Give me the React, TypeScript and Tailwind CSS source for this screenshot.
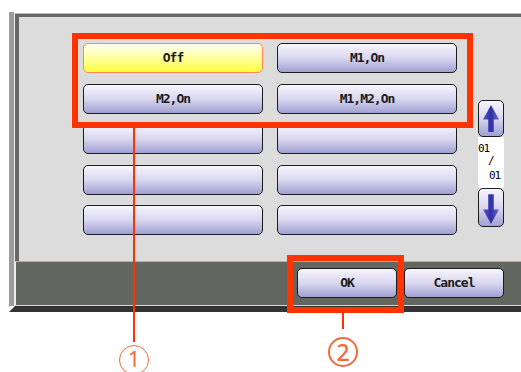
import React from 'react';

type KeyProps = { label?: string; active?: boolean; className?: string };

// Lavender soft key, yellow when it is the selected setting
function Key({ label = '', active = false, className = '' }: KeyProps) {
  const skin = active
    ? 'bg-linear-to-b from-[#fffff4] via-[#ffff9a] to-[#ffff2a] border-[#ff8a55]'
    : 'bg-linear-to-b from-[#f7f5fd] via-[#d9d7ef] to-[#a0a0d2] border-[#1c1c1c]';
  return (
    <div
      className={`h-[30px] rounded-[5px] border-[1.5px] flex items-center justify-center text-[13px] font-bold tracking-[-1px] text-[#1a1a1a] ${skin} ${className}`}
    >
      {label}
    </div>
  );
}

function ArrowKey({ dir, className = '' }: { dir: 'up' | 'down'; className?: string }) {
  const path =
    dir === 'up'
      ? 'M12 4 L20 18 L14.8 18 L14.8 30 L9.2 30 L9.2 18 L4 18 Z'
      : 'M9.2 5 L14.8 5 L14.8 20 L20 20 L12 34 L4 20 L9.2 20 Z';
  return (
    <div
      className={`w-[26px] rounded-[5px] border-[1.5px] border-[#1c1c1c] bg-linear-to-b from-[#f7f5fd] via-[#d9d7ef] to-[#a0a0d2] flex justify-center ${className}`}
    >
      <svg width="24" height="100%" viewBox={dir === 'up' ? '0 0 24 34' : '0 0 24 36'} preserveAspectRatio="none">
        <defs>
          <linearGradient id={`ag-${dir}`} x1="0" y1="0" x2="1" y2="0">
            <stop offset="0" stopColor="#5656c4" />
            <stop offset="0.5" stopColor="#3030a6" />
            <stop offset="1" stopColor="#6a6ad0" />
          </linearGradient>
        </defs>
        <path d={path} fill={`url(#ag-${dir})`} />
      </svg>
    </div>
  );
}

export default function App() {
  const rows: [string, string][] = [
    ['Off', 'M1,On'],
    ['M2,On', 'M1,M2,On'],
    ['', ''],
    ['', ''],
    ['', ''],
  ];
  const rowGap = ['', 'mt-[11px]', 'mt-[10px]', 'mt-[11px]', 'mt-[10px]'];

  return (
    <div className="relative w-[521px] h-[372px] bg-white overflow-hidden font-['DejaVu_Sans_Mono','Liberation_Mono',monospace]">
      <div className="pt-[12px] pl-[9px]">
        <div className="flex">
          {/* left outer bar */}
          <div className="w-[5px] bg-[#9c9c9c]" />
          <div className="w-[1px] bg-[#ececec] mt-[1px]" />

          <div className="flex-1 flex flex-col pt-[1px]">
            <div className="h-[1px] bg-[#b9b9b9]" />
            <div className="h-[3px] bg-[#676767]" />

            {/* panel */}
            <div className="flex h-[244px]">
              <div className="w-[4px] bg-[#676767]" />
              <div className="flex-1 bg-[#dcdcdc] flex pl-[64px] pt-[26px]">
                <div className="flex flex-col w-[374px]">
                  {rows.map((r, i) => (
                    <div key={i} className={`flex gap-[14px] ${rowGap[i]}`}>
                      <Key label={r[0]} active={i === 0} className="w-[180px]" />
                      <Key label={r[1]} className="w-[180px]" />
                    </div>
                  ))}
                </div>

                {/* page scroller */}
                <div className="ml-[21px] mt-[57px] flex flex-col w-[26px]">
                  <ArrowKey dir="up" className="h-[37px]" />
                  <div className="h-[51px] bg-white text-[11px] leading-[11px] text-black pt-[6px] tracking-[-1px]">
                    <div>01</div>
                    <div className="pl-[10px] mt-[1px]">/</div>
                    <div className="pl-[11px] mt-[4px]">01</div>
                  </div>
                  <ArrowKey dir="down" className="h-[39px]" />
                </div>
              </div>
            </div>

            {/* bottom bar */}
            <div className="h-[44px] flex border-t border-[#b0b1ad]">
              <div className="w-[1px] bg-[#f0f0f0]" />
              <div className="flex-1 bg-[#646660] flex justify-end gap-[7px] pt-[6px] pr-[17px]">
                <Key label="OK" className="w-[100px]" />
                <Key label="Cancel" className="w-[100px]" />
              </div>
            </div>
            <div className="h-[1px] bg-[#d6d6d6]" />
          </div>
        </div>
        <div className="h-[6px] bg-[#333333] [clip-path:polygon(6px_0,100%_0,100%_100%,0_100%)]" />
      </div>

      {/* annotations */}
      <div className="absolute left-[72px] top-[33px] w-[401px] h-[95px] border-[6px] border-[#ff3300]" />
      <div className="absolute left-[133px] top-[128px] w-[2px] h-[214px] bg-[#ff3300]" />
      <div className="absolute left-[119px] top-[345px] w-[30px] h-[30px] rounded-full border-[1.5px] border-[#f26a3c] flex items-start justify-center pt-[3px] text-[#f26a3c] text-[21px] leading-[21px] font-['Noto_Sans',sans-serif]">
        1
      </div>

      <div className="absolute left-[287px] top-[255px] w-[117px] h-[58px] border-[6px] border-[#ff3300]" />
      <div className="absolute left-[342px] top-[313px] w-[2px] h-[16px] bg-[#ff3300]" />
      <div className="absolute left-[328px] top-[337px] w-[30px] h-[30px] rounded-full border-2 border-[#f26a3c] flex items-center justify-center text-[#f26a3c] text-[23px] leading-none font-medium font-['Noto_Sans',sans-serif]">
        2
      </div>
    </div>
  );
}
